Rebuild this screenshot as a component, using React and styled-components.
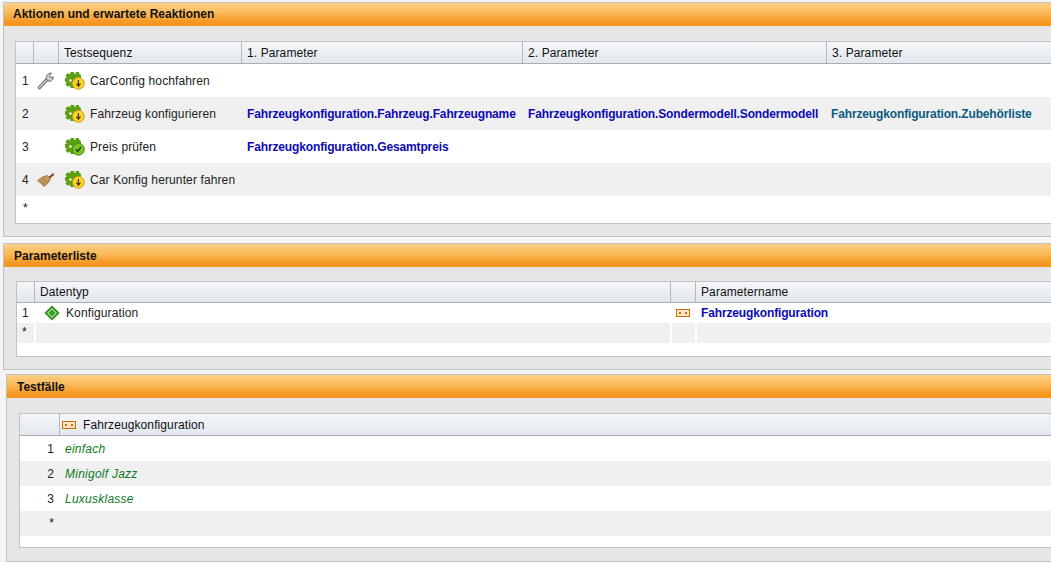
import React from "react";
import styled, { createGlobalStyle } from "styled-components";

const Global = createGlobalStyle`
  html, body { margin: 0; padding: 0; background: #fff; }
  body { font-family: "Liberation Sans", Arial, sans-serif; font-size: 12px; color: #111; }
`;
const Page = styled.div`
  width: 1051px; height: 562px; overflow: hidden;
  display: flex; flex-direction: column;
  background: #f5f5f5;
`;
const Panel = styled.section`
  flex: none;
  width: 1120px;
  height: ${p => p.$h}px;
  margin: ${p => p.$top}px 0 0 ${p => p.$left}px;
  display: flex; flex-direction: column;
  background: #e6e6e6;
  border: 1px solid #c0c0c0;
  box-sizing: border-box;
`;
const PanelHeader = styled.header`
  flex: none; height: 23px; box-sizing: border-box;
  padding: ${p => p.$pt ?? 0}px 0 ${p => p.$pb ?? 0}px ${p => p.$pl}px;
  display: flex; align-items: center;
  font-weight: bold; font-size: 12px; color: #111;
  background: linear-gradient(#fdcf85 0%, #fabb5e 40%, #f59a26 80%, #f3941d 100%);
  border-radius: 3px 3px 0 0;
`;
const PanelBody = styled.div`
  flex: 1; min-height: 0; padding: ${p => p.$pad}px 0 0 ${p => p.$left}px;
  display: flex;
`;
const Table = styled.div`
  width: 1100px; height: ${p => p.$h}px; box-sizing: border-box;
  background: #fff; border: 1px solid #c2c2c2; border-right: 0;
  display: flex; flex-direction: column; overflow: hidden;
`;
const Row = styled.div`
  flex: none; display: grid; height: ${p => p.$h}px;
  grid-template-columns: ${p => p.$cols};
  background: ${p => p.$alt ? "#f0f0f0" : "#fff"};
`;
const HeadRow = styled(Row)`
  background: linear-gradient(#f4f6f9, #e2e8ee);
  border-bottom: 1px solid #a9aeb3;
  box-sizing: border-box;
`;
const HeadCell = styled.div`
  display: flex; align-items: center; gap: ${p => p.$gap ?? 6}px;
  padding-left: ${p => p.$pl ?? 5}px;
  border-left: ${p => p.$first ? "0" : "1px solid #b4b9be"};
  font-size: 12px; color: #111; white-space: nowrap; letter-spacing: 0.1px;
`;
const Cell = styled.div`
  display: flex; align-items: center; gap: ${p => p.$gap ?? 6}px; min-width: 0;
  padding-left: ${p => p.$pl ?? 5}px;
  justify-content: ${p => p.$end ? "flex-end" : "flex-start"};
  padding-right: ${p => p.$end ? 5 : 0}px;
  border-left: ${p => p.$rule ? "2px solid #fff" : "0"};
  box-sizing: border-box;
  white-space: nowrap; font-size: 12px; color: #222; letter-spacing: 0.12px;
`;
const Star = styled.span`
  font-size: 12px; color: #111; line-height: 1; padding-bottom: ${p => p.$pb ?? 3}px;
`;
const ParamLink = styled.span`
  font-weight: bold; font-size: 12px; letter-spacing: -0.14px;
  color: ${p => p.$teal ? "#0b5a80" : "#0a0ab4"};
`;
const Value = styled.span`
  font-style: italic; font-size: 12px; color: #0f7a1c; letter-spacing: 0.25px;
`;

const Wrench = () => (
  <svg width="17" height="18" viewBox="0 0 17 18">
    <path d="M2.4 15.6 L10.5 7" stroke="#666" strokeWidth="3.4" strokeLinecap="round" fill="none" />
    <path d="M2.4 15.6 L10.5 7" stroke="#d4d4d4" strokeWidth="1.4" strokeLinecap="round" fill="none" />
    <path d="M9.3 6.8 C8.8 3.4 11.4 .8 14.4 1.1 L12.5 3.5 L13.7 5.5 L16.2 4.9 C16.3 8 13.6 10 11 9 Z" fill="#cdcdcd" stroke="#666" strokeWidth="1" />
  </svg>
);
const Broom = () => (
  <svg width="17" height="14" viewBox="0 0 17 14">
    <path d="M11.5 5.5 L16 1.5" stroke="#84441a" strokeWidth="2.2" strokeLinecap="round" />
    <path d="M.5 7.6 C4 4.6 7.5 3 10.5 2.6 L13.4 6 C12 9 9 12.6 6.8 13.4 C5.2 11.6 2.6 9.2 .5 7.6 Z" fill="#c99c64" stroke="#8a6234" strokeWidth=".8" />
    <path d="M3.5 7.2 L7.6 11.6 M6.2 5.4 L10 9.6" stroke="#8a6234" strokeWidth=".9" />
  </svg>
);
const teeth = [0, 45, 90, 135];
const Gear = ({ check }) => (
  <svg width="20" height="18" viewBox="0 0 20 18">
    <g fill="#5c9e14">
      {teeth.map(a => (
        <rect key={a} x="5.4" y="0" width="3.8" height="16" transform={`rotate(${a} 7.3 8)`} />
      ))}
      <circle cx="7.3" cy="8" r="6.4" />
      <circle cx="12.5" cy="4.8" r="3.6" />
      <rect x="10.8" y="0" width="3.2" height="3" />
    </g>
    <circle cx="5.4" cy="8.6" r="1.4" fill="#e8f4d2" />
    <circle cx="13.4" cy="11.3" r="5.9" fill={check ? "#79c322" : "#ffd42a"} stroke={check ? "#4c8a14" : "#cf9a1c"} strokeWidth="1" />
    {check
      ? <path d="M10.9 11.3 l1.8 2.1 3.2-4.2" stroke="#123d08" strokeWidth="1.4" fill="none" />
      : <path d="M13.4 8v5.6M11.4 11.7l2 2.5 2-2.5" stroke="#4f3a05" strokeWidth="1.3" fill="none" />}
  </svg>
);
const Diamond = () => (
  <svg width="16" height="16" viewBox="0 0 16 16">
    <path d="M8 .4 15.6 8 8 15.6.4 8z" fill="#2b8f18" />
    <path d="M8 3 13 8 8 13 3 8z" fill="#b8e4a0" />
    <path d="M8 4.4 11.6 8 8 11.6 4.4 8z" fill="#3aa524" />
  </svg>
);
const ParamIcon = () => (
  <svg width="14" height="8" viewBox="0 0 14 8">
    <rect x=".5" y=".5" width="13" height="7" fill="#fbe6c8" stroke="#d46a0a" />
    <rect x="3" y="3" width="2" height="2" fill="#d46a0a" />
    <rect x="9" y="3" width="2" height="2" fill="#d46a0a" />
  </svg>
);

const c1 = "17px 25px 183px 281px 304px 260px";
const c2 = "17px 636px 25px 400px";
const c3 = "39px 1000px";

const steps = [
  { n: "1", tool: <Wrench />, name: "CarConfig hochfahren" },
  { n: "2", alt: true, name: "Fahrzeug konfigurieren",
    p: ["Fahrzeugkonfiguration.Fahrzeug.Fahrzeugname", "Fahrzeugkonfiguration.Sondermodell.Sondermodell"], teal: "Fahrzeugkonfiguration.Zubehörliste" },
  { n: "3", check: true, name: "Preis prüfen", p: ["Fahrzeugkonfiguration.Gesamtpreis"] },
  { n: "4", alt: true, tool: <Broom />, name: "Car Konfig herunter fahren" },
];

export default function App() {
  return (
    <Page>
      <Global />
      <Panel $top={2} $left={3} $h={235}>
        <PanelHeader $pl={9} $pb={1}>Aktionen und erwartete Reaktionen</PanelHeader>
        <PanelBody $pad={15} $left={11}>
          <Table $h={183}>
            <HeadRow $h={22} $cols={c1}>
              <HeadCell $first />
              <HeadCell />
              <HeadCell>Testsequenz</HeadCell>
              <HeadCell>1. Parameter</HeadCell>
              <HeadCell>2. Parameter</HeadCell>
              <HeadCell>3. Parameter</HeadCell>
            </HeadRow>
            {steps.map(s => (
              <Row key={s.n} $h={33} $alt={s.alt} $cols={c1}>
                <Cell $pl={6}>{s.n}</Cell>
                <Cell $pl={4}>{s.tool}</Cell>
                <Cell $pl={7} $gap={5}><Gear check={s.check} /><span>{s.name}</span></Cell>
                <Cell $pl={6}>{s.p && <ParamLink>{s.p[0]}</ParamLink>}</Cell>
                <Cell $pl={6}>{s.p && s.p[1] && <ParamLink>{s.p[1]}</ParamLink>}</Cell>
                <Cell $pl={5}>{s.teal && <ParamLink $teal>{s.teal}</ParamLink>}</Cell>
              </Row>
            ))}
            <Row $h={26} $cols={c1}><Cell $pl={7}><Star>*</Star></Cell></Row>
          </Table>
        </PanelBody>
      </Panel>

      <Panel $top={6} $left={3} $h={127}>
        <PanelHeader $pl={10} $pt={1}>Parameterliste</PanelHeader>
        <PanelBody $pad={14} $left={12}>
          <Table $h={76}>
            <HeadRow $h={21} $cols={c2}>
              <HeadCell $first />
              <HeadCell>Datentyp</HeadCell>
              <HeadCell />
              <HeadCell>Parametername</HeadCell>
            </HeadRow>
            <Row $h={20} $cols={c2}>
              <Cell $pl={5}>1</Cell>
              <Cell $pl={10}><Diamond /><span>Konfiguration</span></Cell>
              <Cell $pl={6}><ParamIcon /></Cell>
              <Cell $pl={6}><ParamLink>Fahrzeugkonfiguration</ParamLink></Cell>
            </Row>
            <Row $h={20} $alt $cols={c2}>
              <Cell $pl={5}><Star>*</Star></Cell>
              <Cell $rule />
              <Cell $rule />
              <Cell $rule />
            </Row>
          </Table>
        </PanelBody>
      </Panel>

      <Panel $top={4} $left={6} $h={188}>
        <PanelHeader $pl={10} $pt={1}>Testfälle</PanelHeader>
        <PanelBody $pad={15} $left={12}>
          <Table $h={135}>
            <HeadRow $h={22} $cols={c3}>
              <HeadCell $first />
              <HeadCell $pl={2} $gap={7}><ParamIcon />Fahrzeugkonfiguration</HeadCell>
            </HeadRow>
            {["einfach", "Minigolf Jazz", "Luxusklasse"].map((v, i) => (
              <Row key={v} $h={25} $alt={i === 1} $cols={c3}>
                <Cell $end>{i + 1}</Cell>
                <Cell $pl={6}><Value>{v}</Value></Cell>
              </Row>
            ))}
            <Row $h={25} $alt $cols={c3}><Cell $end><Star $pb={1}>*</Star></Cell></Row>
          </Table>
        </PanelBody>
      </Panel>
    </Page>
  );
}
